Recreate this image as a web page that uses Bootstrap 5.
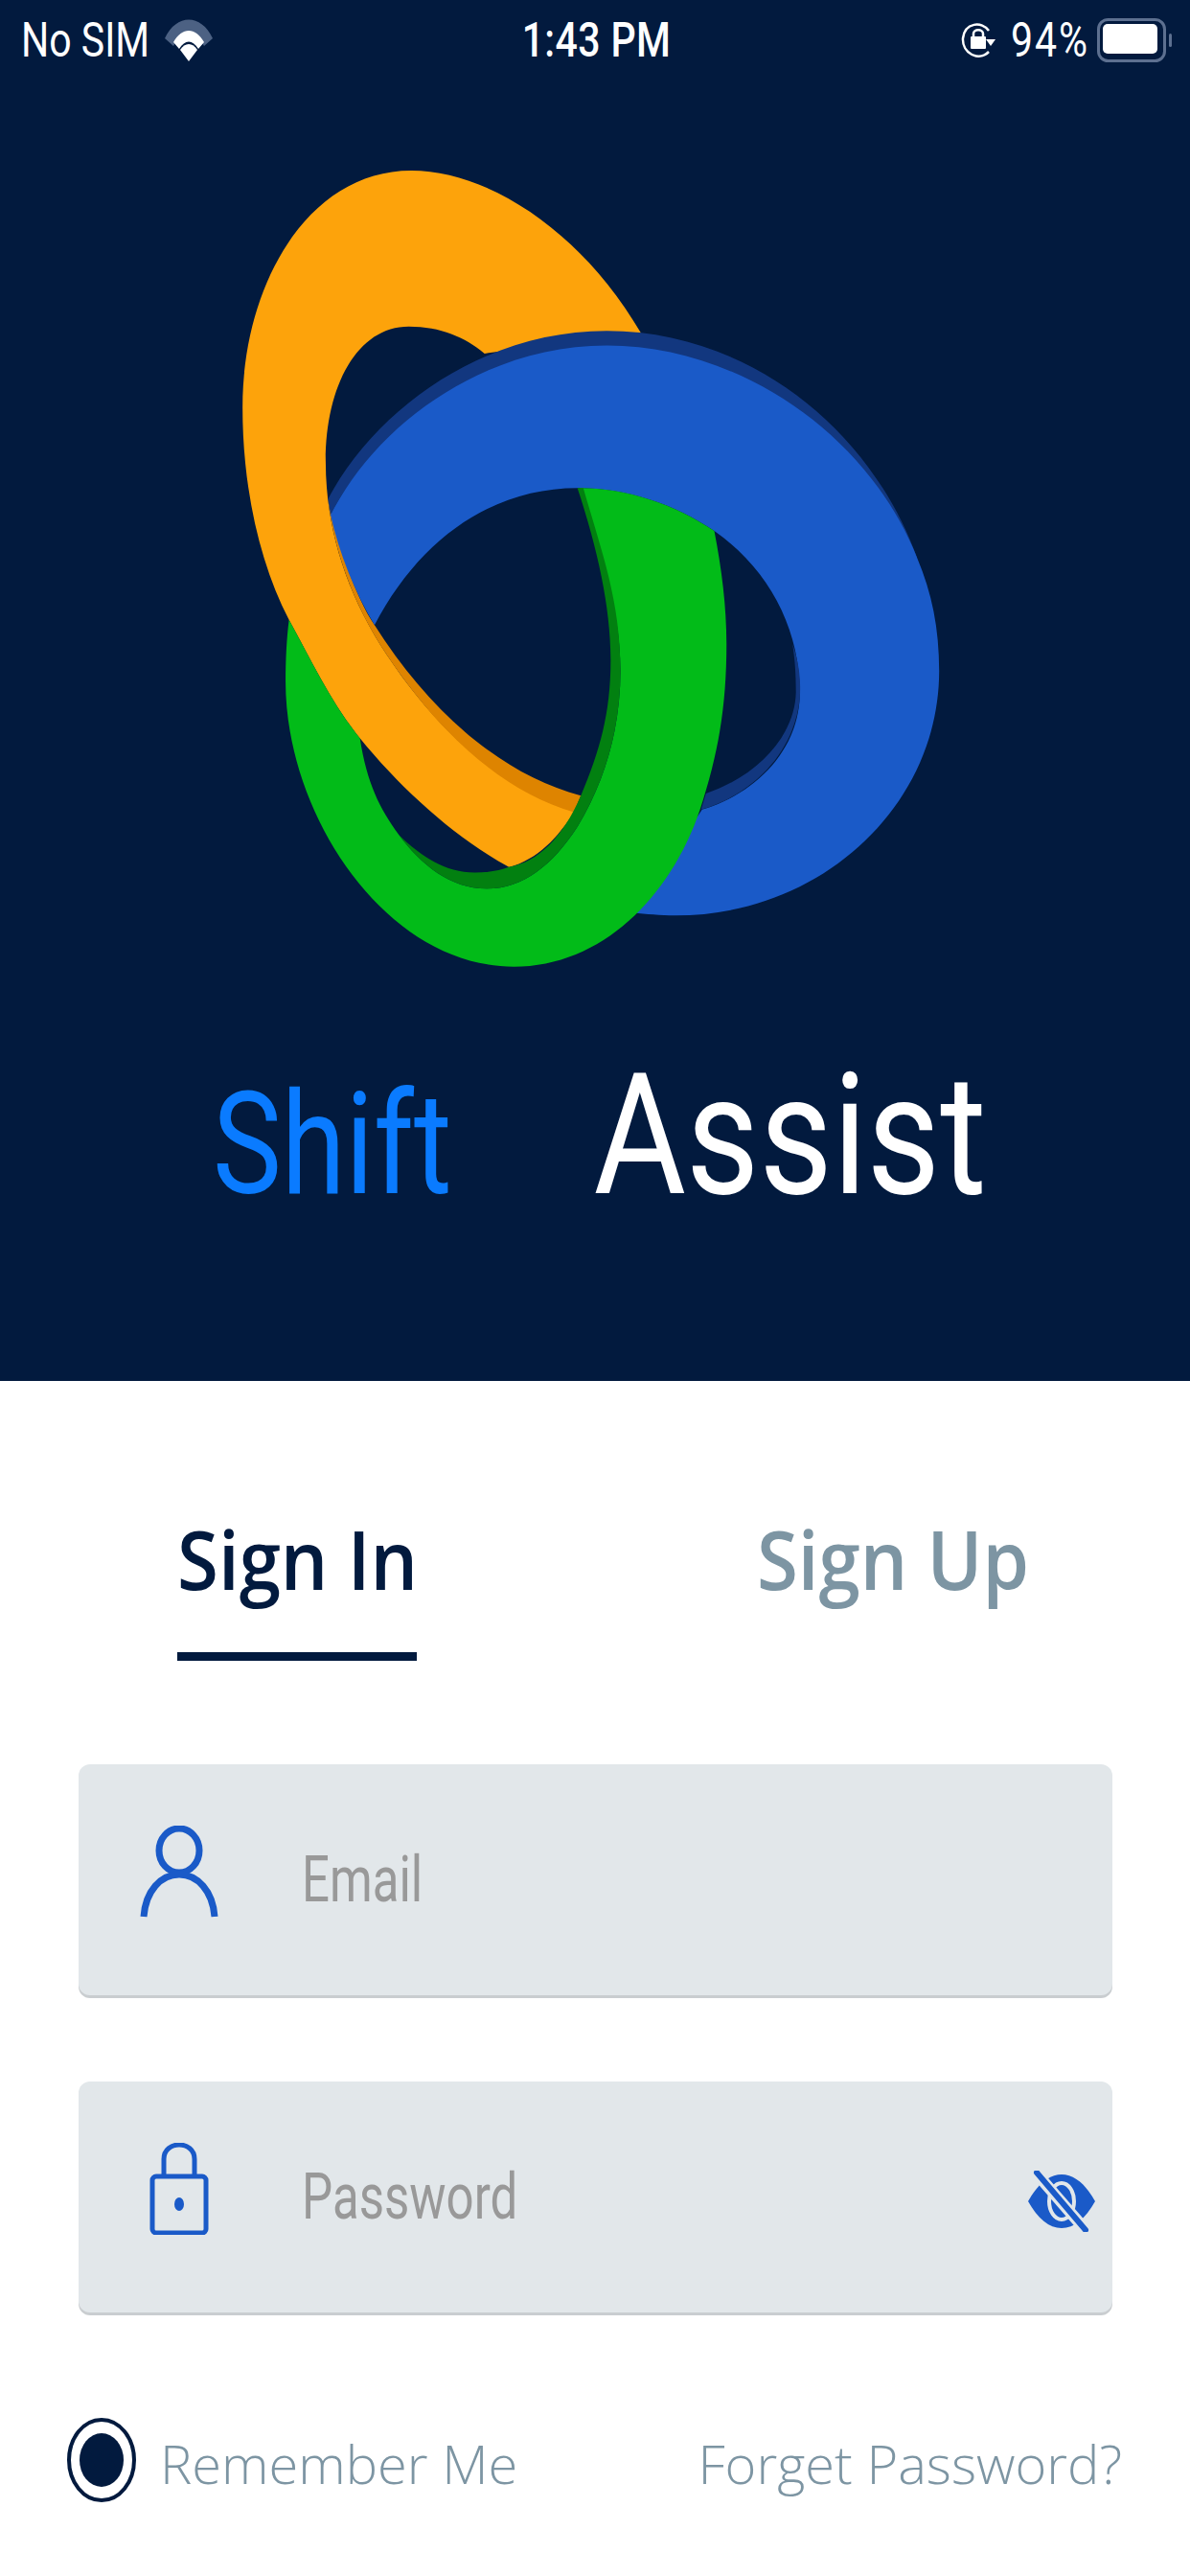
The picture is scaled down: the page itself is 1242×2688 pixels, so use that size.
<!DOCTYPE html>
<html lang="en">
<head>
    <meta charset="UTF-8">
    <meta name="viewport" content="width=device-width, initial-scale=1.0">
    <title>Shift Assist</title>
    <link href="https://cdn.jsdelivr.net/npm/bootstrap@5.3.3/dist/css/bootstrap.min.css" rel="stylesheet">
    <style>
        body {
            width: 1242px;
            height: 2688px;
            overflow: hidden;
            background-color: #fff;
            font-family: "Open Sans", sans-serif;
        }
        .stretched {
            display: inline-block;
            transform: scaleY(1.3);
        }
        .hero {
            height: 1441px;
            background-color: #021a3e;
            color: #fff;
        }
        .status-bar {
            display: grid;
            grid-template-columns: 1fr auto 1fr;
            align-items: center;
            height: 84px;
            padding: 0 19px 0 22px;
            font-family: Roboto, sans-serif;
            font-size: 41px;
            line-height: 1;
        }
        .status-bar .stretched {
            transform: scaleY(1.2);
        }
        .status-time {
            font-weight: 500;
            letter-spacing: .4px;
        }
        .status-battery-text {
            letter-spacing: 2px;
        }
        .logo-art {
            display: block;
            width: 800px;
            height: 880px;
            margin: 66px 0 0 220px;
        }
        .brand {
            padding: 96px 0 0 222px;
            font-family: Roboto, sans-serif;
            line-height: 1;
        }
        .brand-shift {
            color: #0a7bff;
            font-size: 121px;
            transform: scaleY(1.23);
            transform-origin: 0 100%;
        }
        .brand-assist {
            margin-left: 148px;
            font-size: 148px;
            transform: scaleY(1.19);
            transform-origin: 0 100%;
        }
        .auth-tabs {
            padding: 140px 0 0 185px;
        }
        .auth-tab {
            width: 250px;
            height: 152px;
            font-size: 78px;
            font-weight: 600;
            line-height: 90px;
            text-align: center;
            white-space: nowrap;
            color: #7d95a3;
        }
        .auth-tab .stretched {
            transform: scaleY(1.1);
        }
        .auth-tab.is-active {
            color: #021a3e;
            border-bottom: 9px solid #021a3e;
        }
        .auth-tab + .auth-tab {
            margin-left: 352px;
            width: 290px;
        }
        .field-box {
            height: 241px;
            margin: 0 81px 0 82px;
            padding: 0 18px 0 64px;
            background-color: #e2e7ea;
            border-radius: 12px;
            box-shadow: 0 3px 0 #c9cdd0;
        }
        .field-box + .field-box {
            margin-top: 90px;
        }
        .field-stack {
            margin-top: 108px;
        }
        .field-icon {
            flex: 0 0 82px;
            margin-bottom: 18px;
        }
        .field-label {
            margin-left: 87px;
            color: #999;
            font-family: Roboto, sans-serif;
            font-size: 51px;
            line-height: 1;
        }
        .eye-icon {
            margin-left: auto;
            margin-top: 8px;
        }
        .options-row {
            height: 90px;
            margin-top: 112px;
            padding: 0 71px 0 70px;
            color: #7d95a3;
            font-size: 56px;
            font-weight: 300;
            line-height: 90px;
        }
        .options-row svg {
            margin-top: -6px;
            margin-right: 25px;
        }
    </style>
</head>
<body>

    <!-- Cabecera con logo -->
    <div class="hero">
        <div class="status-bar">
            <div class="d-flex align-items-center">
                <span class="stretched">No SIM</span>
                <svg class="ms-3" width="50" height="44" viewBox="0 0 50 44">
                    <path d="M0 20 C12 -6 38 -6 50 20 L41 28 C32 12 18 12 9 28 Z" fill="#4c6183"/>
                    <path d="M9 24 C18 8 32 8 41 24 L35 31 C29 21 21 21 15 31 Z" fill="#fff"/>
                    <path d="M16 32 C21 24 29 24 34 32 L25 44 Z" fill="#fff"/>
                </svg>
            </div>
            <span class="stretched status-time">1:43 PM</span>
            <div class="d-flex align-items-center justify-content-end">
                <svg width="36" height="38" viewBox="0 0 36 38">
                    <path d="M29 9 C22 -1 4 0 2 17 C1 32 18 42 29 31" fill="none" stroke="#fff" stroke-width="2.5"/>
                    <path d="M26 18 L36 18 L31 25 Z" fill="#fff"/>
                    <path d="M13 16 V12 C13 7 23 7 23 12 V16" fill="none" stroke="#fff" stroke-width="2.5"/>
                    <rect x="10" y="15" width="16" height="13" rx="1" fill="#fff"/>
                </svg>
                <span class="stretched status-battery-text ms-3">94%</span>
                <svg class="ms-2" width="78" height="46" viewBox="0 0 78 46">
                    <rect x="1.5" y="1.5" width="69" height="43" rx="10" fill="none" stroke="#5d7090" stroke-width="3"/>
                    <rect x="6" y="6" width="57" height="31" rx="5" fill="#fff"/>
                    <rect x="75" y="16" width="3" height="14" rx="1.5" fill="#5d7090"/>
                </svg>
            </div>
        </div>

        <svg class="logo-art" viewBox="0 0 1568 1568" preserveAspectRatio="none">
            <path fill="#fda30b" d="M880 352 C760 165 570 50 410 50 C200 50 65 260 65 490 C65 640 100 780 160 885 C205 960 250 1045 305 1105 C390 1200 500 1290 610 1345 C670 1330 710 1290 745 1240 C600 1200 470 1100 360 950 C280 840 235 720 235 590 C235 450 300 340 405 340 C470 340 520 360 560 390 Z"/>
            <path fill="#de8400" d="M240 660 C262 750 295 840 335 895 C450 1060 600 1175 757 1212 L743 1243 C600 1205 470 1100 360 950 C290 855 250 750 240 660 Z"/>
            <path fill="#12377f" d="M240 660 C340 490 560 348 810 348 C1100 348 1350 530 1445 770 L1400 760 C1300 540 1050 400 810 400 C560 400 340 520 245 690 Z"/>
            <path fill="#1a5ac8" d="M245 690 C340 520 560 375 810 375 C1080 375 1345 540 1445 770 C1475 835 1490 900 1490 980 C1490 1230 1250 1435 950 1435 C920 1435 890 1432 865 1430 L1005 1238 C1110 1210 1205 1130 1205 1020 C1205 900 1140 790 1030 720 C950 670 850 640 750 640 C580 640 430 730 335 895 C295 835 262 760 245 690 Z"/>
            <path fill="#12377f" d="M1190 930 C1205 970 1207 1000 1205 1030 C1195 1130 1110 1210 1003 1238 L1013 1208 C1120 1175 1195 1100 1197 1020 C1197 985 1195 960 1190 930 Z"/>
            <path fill="#02bb18" d="M160 885 C155 920 153 960 153 1000 C153 1250 360 1530 620 1530 C800 1530 940 1400 1000 1240 C1040 1130 1055 1040 1055 930 C1055 860 1045 790 1030 720 C950 670 850 640 755 640 C790 750 838 850 838 980 C838 1080 810 1180 750 1270 C700 1340 640 1385 565 1385 C490 1385 430 1340 385 1285 C345 1235 320 1190 305 1105 C250 1045 205 960 160 885 Z"/>
            <path fill="#028010" d="M750 640 L762 640 C800 760 838 850 838 980 C838 1080 810 1180 750 1270 C700 1340 640 1385 565 1385 C490 1385 430 1340 385 1285 C430 1325 480 1355 540 1355 C565 1355 590 1352 610 1345 C670 1335 720 1290 757 1212 C795 1130 818 1060 818 960 C818 860 790 750 750 640 Z"/>
        </svg>

        <div class="brand d-flex align-items-baseline">
            <span class="stretched brand-shift">Shift</span>
            <span class="stretched brand-assist">Assist</span>
        </div>
    </div>

    <!-- Pestañas -->
    <div class="auth-tabs d-flex">
        <div class="auth-tab is-active"><span class="stretched">Sign In</span></div>
        <div class="auth-tab"><span class="stretched">Sign Up</span></div>
    </div>

    <!-- Campos -->
    <div class="field-stack">
        <div class="field-box d-flex align-items-center">
            <svg class="field-icon" width="82" height="96" viewBox="0 0 82 96">
                <ellipse cx="41" cy="26" rx="21" ry="23" fill="none" stroke="#1a5ac8" stroke-width="7"/>
                <path d="M4 95 C6 68 22 51 41 51 C60 51 76 68 78 95" fill="none" stroke="#1a5ac8" stroke-width="7"/>
            </svg>
            <span class="stretched field-label">Email</span>
        </div>
        <div class="field-box d-flex align-items-center">
            <svg class="field-icon" width="82" height="96" viewBox="0 0 82 96">
                <path d="M25 35 V17 C25 -3 57 -3 57 17 V35" fill="none" stroke="#1a5ac8" stroke-width="5"/>
                <rect x="13" y="35" width="56" height="59" rx="4" fill="none" stroke="#1a5ac8" stroke-width="5"/>
                <ellipse cx="41" cy="64" rx="5" ry="7" fill="#1a5ac8"/>
            </svg>
            <span class="stretched field-label">Password</span>
            <svg class="eye-icon" width="70" height="64" viewBox="0 0 70 64">
                <path d="M0 32 C10 14 22 4 35 4 C48 4 60 14 70 32 C60 50 48 60 35 60 C22 60 10 50 0 32 Z" fill="#1a5ac8"/>
                <ellipse cx="35" cy="32" rx="13" ry="19" fill="none" stroke="#e2e7ea" stroke-width="4"/>
                <ellipse cx="35" cy="32" rx="7" ry="12" fill="#1a5ac8"/>
                <path d="M8 2 L60 62" stroke="#e2e7ea" stroke-width="12"/>
                <path d="M9 2 L60 62" stroke="#1a5ac8" stroke-width="6" stroke-linecap="round"/>
            </svg>
        </div>
    </div>

    <!-- Opciones -->
    <div class="options-row d-flex align-items-center justify-content-between">
        <div class="d-flex align-items-center">
            <svg width="72" height="88" viewBox="0 0 72 88">
                <ellipse cx="36" cy="44" rx="34" ry="42" fill="#fff" stroke="#021a3e" stroke-width="4"/>
                <ellipse cx="36" cy="44" rx="23" ry="28" fill="#021a3e"/>
            </svg>
            <span>Remember Me</span>
        </div>
        <span>Forget Password?</span>
    </div>

    <script src="https://cdn.jsdelivr.net/npm/bootstrap@5.3.3/dist/js/bootstrap.bundle.min.js"></script>
</body>
</html>
